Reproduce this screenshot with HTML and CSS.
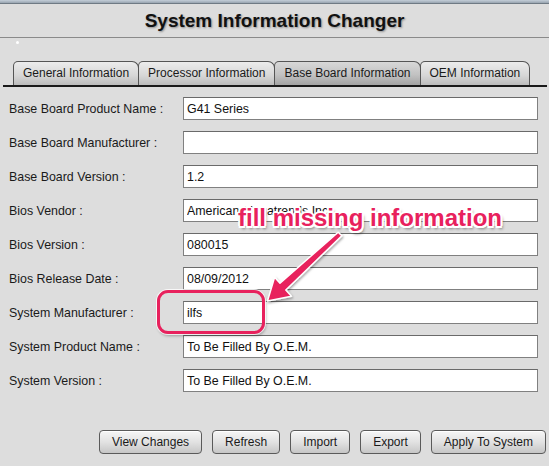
FILE: index.html
```html
<!DOCTYPE html>
<html lang="en">
<head>
    <meta charset="UTF-8">
    <title>System Information Changer</title>
    <link rel="stylesheet" href="styles.css">
</head>
<body>

<div class="window">
    <div class="top-strip"></div>

    <div class="title-bar">
        <h1>System Information Changer</h1>
    </div>

    <div class="tab-area">
        <span class="dot"></span>
        <div class="tabs">
            <div class="tab">General Information</div>
            <div class="tab">Processor Information</div>
            <div class="tab active">Base Board Information</div>
            <div class="tab">OEM Information</div>
        </div>
    </div>

    <div class="form">
        <label>Base Board Product Name :</label>
        <input type="text" value="G41 Series">

        <label>Base Board Manufacturer :</label>
        <input type="text" value="">

        <label>Base Board Version :</label>
        <input type="text" value="1.2">

        <label>Bios Vendor :</label>
        <input type="text" value="American Megatrends Inc.">

        <label>Bios Version :</label>
        <input type="text" value="080015">

        <label>Bios Release Date :</label>
        <input type="text" value="08/09/2012">

        <label>System Manufacturer :</label>
        <input type="text" value="ilfs">

        <label>System Product Name :</label>
        <input type="text" value="To Be Filled By O.E.M.">

        <label>System Version :</label>
        <input type="text" value="To Be Filled By O.E.M.">
    </div>

    <div class="buttons">
        <button>View Changes</button>
        <button>Refresh</button>
        <button>Import</button>
        <button>Export</button>
        <button>Apply To System</button>
    </div>

    <!-- callout drawn over the form -->
    <div class="note-text">fill missing information</div>
    <div class="note-box"></div>
    <svg class="note-arrow" width="549" height="466" viewBox="0 0 549 466">
        <defs>
            <filter id="soft" x="-20%" y="-20%" width="140%" height="140%">
                <feDropShadow dx="1" dy="1.5" stdDeviation="1.2" flood-color="#000" flood-opacity="0.35"/>
            </filter>
        </defs>
        <polygon filter="url(#soft)" fill="#e8215d" stroke="#fff" stroke-width="1.5" stroke-linejoin="round"
                 points="341.8,235.8 285.8,290 291.4,296.2 267.5,301 274.6,277.2 280.0,283.2 338.2,232.2"/>
    </svg>
</div>

</body>
</html>
```

FILE: styles.css
```css
body {
    margin: 0;
    font-family: "Liberation Sans", Arial, sans-serif;
    background: #dddddd;
}

.window {
    position: relative;
    width: 549px;
    height: 466px;
    background: #dddddd;
    overflow: hidden;
}

.top-strip {
    height: 3px;
    background: linear-gradient(#c4ced8, #98a4b0);
    border-bottom: 1px solid #6f7a84;
}

.title-bar {
    height: 33px;
    border-bottom: 1px solid #8a8a8a;
    display: flex;
    align-items: center;
    justify-content: center;
}

h1 {
    margin: 0;
    font-size: 19px;
    font-weight: bold;
    color: #111;
    text-shadow: 1px 1px 2px rgba(0, 0, 0, 0.35);
}

.tab-area {
    position: relative;
    height: 47px;
    display: flex;
    align-items: flex-end;
    margin: 0 2px 0 3px;
    border-bottom: 2px solid #1a1a1a;
}

.dot {
    position: absolute;
    left: 13px;
    top: 3px;
    width: 3px;
    height: 3px;
    border-radius: 50%;
    background: #fff;
}

.tabs {
    display: flex;
    padding-left: 10px;
}

.tab {
    height: 23px;
    line-height: 23px;
    padding: 0 9px;
    font-size: 12px;
    color: #1a1a1a;
    border: 1px solid #555;
    border-bottom: none;
    border-radius: 5px 7px 0 0;
    background: linear-gradient(#ececec, #d6d6d6 60%, #bcbcbc);
}

.tab + .tab {
    margin-left: -1px;
}

.tab.active {
    background: linear-gradient(#d8d8d8, #c2c2c2 55%, #a4a4a4);
}

.form {
    display: grid;
    grid-template-columns: 174px 1fr;
    row-gap: 11px;
    align-items: center;
    padding: 10px 11px 0 9px;
}

.form label {
    font-size: 12.4px;
    color: #1a1a1a;
}

.form input {
    box-sizing: border-box;
    height: 23px;
    margin: 0;
    padding: 0 3px;
    border: 1px solid #808080;
    border-top-color: #6a6a6a;
    background: #fff;
    font-family: "Liberation Sans", Arial, sans-serif;
    font-size: 12.4px;
    color: #111;
    outline: none;
}

.buttons {
    display: flex;
    justify-content: flex-end;
    gap: 10px;
    margin-top: 38px;
    padding-right: 3px;
}

.buttons button {
    height: 24px;
    padding: 0 12px;
    font-family: "Liberation Sans", Arial, sans-serif;
    font-size: 12px;
    color: #1a1a1a;
    border: 1px solid #5a5a5a;
    border-radius: 4px;
    background: linear-gradient(#f6f6f6, #e2e2e2 50%, #c6c6c6);
    box-shadow: inset 0 1px 0 #fff;
}

/* callout */
.note-text {
    position: absolute;
    left: 238px;
    top: 206px;
    font-size: 24px;
    line-height: 24px;
    font-weight: bold;
    color: #e8215d;
    white-space: nowrap;
    text-shadow:
        -2px 0 0 #fff, 2px 0 0 #fff, 0 -2px 0 #fff, 0 2px 0 #fff,
        -1.5px -1.5px 0 #fff, 1.5px -1.5px 0 #fff, -1.5px 1.5px 0 #fff, 1.5px 1.5px 0 #fff,
        2px 3px 3px rgba(0, 0, 0, 0.45);
}

.note-box {
    position: absolute;
    left: 157px;
    top: 290px;
    width: 102px;
    height: 38px;
    border: 3px solid #e8215d;
    border-radius: 11px;
    box-shadow: 0 0 0 1px rgba(255, 255, 255, 0.8), 1px 2px 3px rgba(0, 0, 0, 0.3);
}

.note-arrow {
    position: absolute;
    left: 0;
    top: 0;
}
```
